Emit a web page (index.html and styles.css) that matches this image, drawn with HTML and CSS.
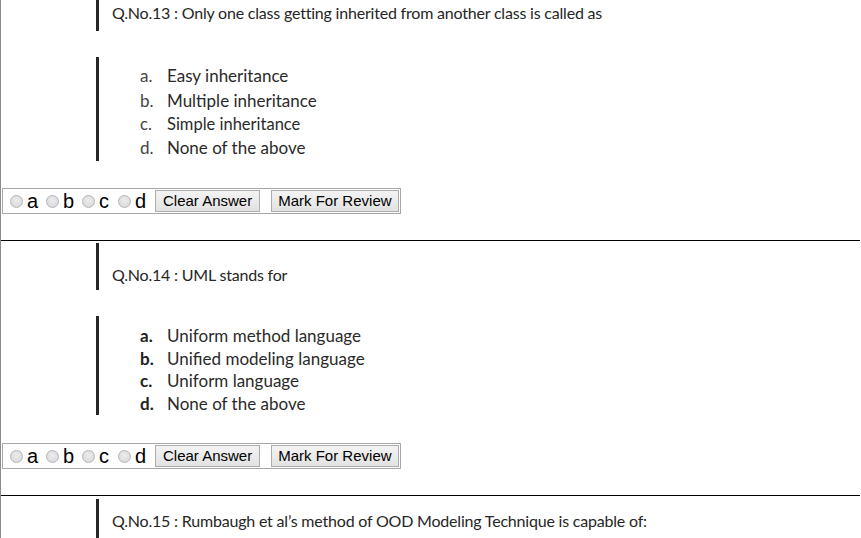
FILE: index.html
```html
<!DOCTYPE html>
<html>
<head>
<meta charset="utf-8">
<link rel="stylesheet" href="styles.css">
</head>
<body>
<div class="page">
  <section class="block b1">
    <div class="qimg"><p class="qtext">Q.No.13 : Only one class getting inherited from another class is called as</p></div>
    <div class="opts">
      <div class="opt"><span class="ol">a.</span><span>Easy inheritance</span></div>
      <div class="opt"><span class="ol">b.</span><span>Multiple inheritance</span></div>
      <div class="opt small"><span class="ol">c.</span><span>Simple inheritance</span></div>
      <div class="opt"><span class="ol">d.</span><span>None of the above</span></div>
    </div>
    <div class="answer">
      <span class="radio"></span><span class="rl">a</span>
      <span class="radio"></span><span class="rl">b</span>
      <span class="radio"></span><span class="rl">c</span>
      <span class="radio"></span><span class="rl">d</span>
      <button class="btn">Clear Answer</button>
      <button class="btn btn2">Mark For Review</button>
    </div>
  </section>
  <section class="block b2">
    <div class="qimg"><p class="qtext">Q.No.14 : UML stands for</p></div>
    <div class="opts">
      <div class="opt"><span class="ol">a.</span><span>Uniform method language</span></div>
      <div class="opt"><span class="ol">b.</span><span>Unified modeling language</span></div>
      <div class="opt"><span class="ol">c.</span><span>Uniform language</span></div>
      <div class="opt"><span class="ol">d.</span><span>None of the above</span></div>
    </div>
    <div class="answer">
      <span class="radio"></span><span class="rl">a</span>
      <span class="radio"></span><span class="rl">b</span>
      <span class="radio"></span><span class="rl">c</span>
      <span class="radio"></span><span class="rl">d</span>
      <button class="btn">Clear Answer</button>
      <button class="btn btn2">Mark For Review</button>
    </div>
  </section>
  <section class="block b3">
    <div class="qimg"><p class="qtext">Q.No.15 : Rumbaugh et al’s method of OOD Modeling Technique is capable of:</p></div>
  </section>
</div>
</body>
</html>
```
FILE: styles.css
```css
html, body {
  margin: 0;
  padding: 0;
  background: #fff;
  overflow: hidden;
}
.page {
  width: 860px;
  height: 538px;
  border-left: 1px solid #8c8c8c;
  box-sizing: border-box;
  overflow: hidden;
}
.block {
  display: flex;
  flex-direction: column;
  align-items: flex-start;
  border-bottom: 1px solid #000;
  margin-left: -1px;
  padding-left: 1px;
}
.b3 { border-bottom: none; }
.qimg {
  margin-left: 95px;
  border-left: 3px solid #262626;
  padding-left: 13px;
  box-sizing: border-box;
  width: 560px;
  display: flex;
  align-items: flex-end;
}
.qtext {
  margin: 0;
  font-family: Lato, "Open Sans", sans-serif;
  font-size: 16px;
  line-height: 18px;
  color: #262626;
  letter-spacing: -0.2px;
  white-space: nowrap;
}
.b1 .qimg { height: 31px; padding-bottom: 9px; }
.b2 .qimg { margin-top: 2px; height: 47px; padding-bottom: 6px; }
.b3 .qimg { margin-top: 3px; height: 40px; padding-bottom: 9px; }
.opts {
  margin-left: 95px;
  border-left: 3px solid #262626;
  box-sizing: border-box;
  width: 400px;
  padding-left: 41px;
  font-family: Lato, "Open Sans", sans-serif;
  font-size: 17px;
  color: #2a2a2a;
}
.b1 .opts { margin-top: 26px; height: 104px; padding-top: 6px; }
.b2 .opts { margin-top: 26px; height: 99px; padding-top: 9px; }
.opt {
  display: flex;
  white-space: nowrap;
}
.b1 .opt { height: 25px; line-height: 25px; }
.b1 .opt.small { font-size: 16.5px; height: 22px; line-height: 22px; }
.b2 .opt { height: 22.5px; line-height: 22.5px; }
.ol {
  width: 27px;
  flex: none;
}
.b2 .ol { font-weight: bold; color: #222; }
.b1 .ol { color: #444; }
.answer {
  display: flex;
  align-items: center;
  margin-left: 1px;
  width: 399px;
  height: 26px;
  box-sizing: border-box;
  border: 1px solid #a8a8a8;
  padding-left: 5px;
  font-family: "Liberation Sans", Arial, sans-serif;
  font-size: 20px;
  color: #000;
}
.b1 .answer { margin-top: 27px; margin-bottom: 26px; }
.b2 .answer { margin-top: 28px; margin-bottom: 26px; }
.radio {
  width: 11px;
  height: 11px;
  border: 1px solid #b5b5b5;
  border-radius: 50%;
  background: radial-gradient(circle at 50% 40%, #ececec 0%, #d6d6d6 100%);
  margin: 0 4px 0 2px;
  flex: none;
}
.rl {
  width: 13px;
  line-height: 22px;
  margin-right: 4px;
  flex: none;
}
.btn {
  flex: none;
  white-space: nowrap;
  margin: 0 0 0 3px;
  height: 22px;
  padding: 0 7px;
  border: 1px solid #adadad;
  border-radius: 0;
  background: linear-gradient(#f3f3f3, #e2e2e2);
  font-family: "Liberation Sans", Arial, sans-serif;
  font-size: 15px;
  color: #000;
  line-height: 20px;
}
.btn2 { margin-left: 11px; padding: 0 6px; }
```
